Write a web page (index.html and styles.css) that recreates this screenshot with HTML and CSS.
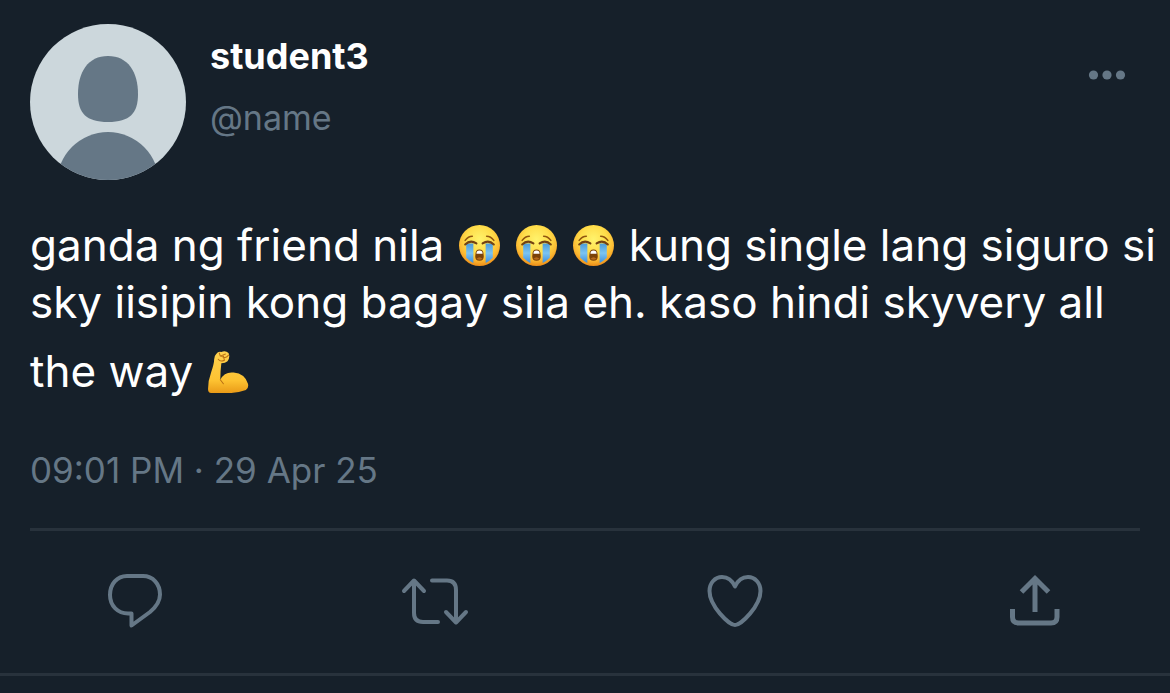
FILE: index.html
```html
<!DOCTYPE html>
<html lang="en">
<head>
  <meta charset="UTF-8" />
  <title>student3</title>
  <meta name="viewport" content="width=device-width, initial-scale=1.0" />
  <link rel="stylesheet" href="styles.css">
</head>
<body>

<svg class="defs" aria-hidden="true">
  <defs>
    <radialGradient id="face" cx="50%" cy="35%" r="65%">
      <stop offset="0" stop-color="#fff36c" />
      <stop offset="0.5" stop-color="#ffdd4a" />
      <stop offset="0.8" stop-color="#fcb831" />
      <stop offset="1" stop-color="#ec8d19" />
    </radialGradient>
    <linearGradient id="tear" x1="0" y1="0" x2="0" y2="1">
      <stop offset="0" stop-color="#4b9bd8" />
      <stop offset="0.5" stop-color="#7cc4f2" />
      <stop offset="1" stop-color="#3f8fdc" />
    </linearGradient>
    <linearGradient id="arm" x1="0" y1="0" x2="0" y2="1">
      <stop offset="0" stop-color="#ffd250" />
      <stop offset="0.7" stop-color="#fdc231" />
      <stop offset="1" stop-color="#e99a17" />
    </linearGradient>
    <symbol id="sob" viewBox="0 0 42 42">
      <circle cx="21" cy="21" r="20" fill="url(#face)" />
      <path d="M8 19H15V38Q11 36 8 33ZM27 19H34V33Q31 36 27 38Z" fill="url(#tear)" />
      <path d="M7 16Q10 12 14 12M28 12Q32 12 35 16" fill="none" stroke="#91550f" stroke-width="1.5" stroke-linecap="round" />
      <path d="M7 20Q12 15 18 19M24 19Q30 15 35 20" fill="none" stroke="#744313" stroke-width="2" stroke-linecap="round" />
      <path d="M17 30Q17 25 21 25Q25 25 25 30Q26 36 21 36Q16 36 17 30Z" fill="#7b4209" />
      <path d="M18 29Q18 26 21 26Q24 26 24 29Z" fill="#fff" />
      <path d="M18 34Q21 31 24 34Q21 36 18 34Z" fill="#b5691c" />
    </symbol>
    <symbol id="biceps" viewBox="0 0 42 42">
      <path d="M9 4Q11 1 14 2Q18 0 21 3Q23 7 20 11Q18 13 14 13Q13 21 13 29Q17 21 26 22Q37 23 40 33Q41 37 38 39Q27 43 13 42H4Q1 42 1 38Q1 30 4 22Q7 13 7 9Q7 6 9 4Z" fill="url(#arm)" />
      <path d="M12 3L13 6L18 4M14 6Q18 9 21 5M16 6L17 10Q13 12 11 9M13 29L16 33" fill="none" stroke="#b96f13" stroke-width="1" stroke-linecap="round" />
    </symbol>
  </defs>
</svg>

<article class="tweet">
  <header class="tweet-header">
    <svg class="avatar" viewBox="0 0 156 156" role="img" aria-label="student3">
      <clipPath id="round"><circle cx="78" cy="78" r="78" /></clipPath>
      <g clip-path="url(#round)">
        <rect width="156" height="156" fill="#ccd7dc" />
        <path d="M78 32C98 32 108 48 108 70C108 89 100 98 78 98C56 98 48 89 48 70C48 48 58 32 78 32Z" fill="#657786" />
        <circle cx="78" cy="159" r="51" fill="#657786" />
      </g>
    </svg>
    <div class="user">
      <a class="name" href="#">student3</a>
      <a class="handle" href="#">@name</a>
    </div>
    <button class="more" aria-label="More">
      <svg width="38" height="10" viewBox="0 0 38 10" fill="currentColor">
        <circle cx="5.5" cy="5" r="4.6" />
        <circle cx="19" cy="5" r="4.6" />
        <circle cx="32.5" cy="5" r="4.6" />
      </svg>
    </button>
  </header>

  <p class="text">
    ganda ng friend nila
    <svg class="emoji" role="img" aria-label="crying"><use href="#sob" /></svg>
    <svg class="emoji" role="img" aria-label="crying"><use href="#sob" /></svg>
    <svg class="emoji" role="img" aria-label="crying"><use href="#sob" /></svg>
    kung single lang siguro si<br>
    sky iisipin kong bagay sila eh. kaso hindi skyvery all
    <span class="last-line">the way <svg class="emoji" role="img" aria-label="strong"><use href="#biceps" /></svg></span>
  </p>

  <time class="date" datetime="2025-04-29T21:01">09:01 PM · 29 Apr 25</time>

  <div class="actions">
    <button aria-label="Reply">
      <svg class="icon" viewBox="0 0 80 80">
        <path d="M32 16H48C58 16 65 24 65 34.5C65 42 61 47 55 52L36.5 65.5V53.5H33C23 53.5 15 46 15 35C15 24 22 16 32 16Z" />
      </svg>
    </button>
    <button aria-label="Retweet">
      <svg class="icon" viewBox="0 0 80 80">
        <path d="M9 31L19 20.5L29 31M19 21V53Q19 62 28 62H43M37 20.5H52Q61 20.5 61 30V61M51 52L61 62.5L71 52" />
      </svg>
    </button>
    <button aria-label="Like">
      <svg class="icon" viewBox="0 0 80 80">
        <path d="M40 26.5C37 20 32 17 27 17C20 17 14.5 23 14.5 31C14.5 46 34 65 40 65C46 65 65.5 46 65.5 31C65.5 23 60 17 53 17C48 17 43 20 40 26.5Z" />
      </svg>
    </button>
    <button aria-label="Share">
      <svg class="icon icon-share" viewBox="0 0 80 80">
        <path d="M40 18V52M26.5 32L40 18.5L53.5 32M17.5 49V57Q17.5 63 23.5 63H56Q62 63 62 57V49" />
      </svg>
    </button>
  </div>
</article>

</body>
</html>
```

FILE: styles.css
```css
:root {
  --bg-color: #16202a;
  --text-color: #ffffff;
  --muted: #657786;
  --line: #28323c;
}

* {
  box-sizing: border-box;
}

body {
  margin: 0;
  font-family: 'Inter', sans-serif;
  background: var(--bg-color);
  color: var(--text-color);
}

a {
  text-decoration: none;
}

button {
  display: flex;
  padding: 0;
  border: none;
  background: none;
  color: var(--muted);
  cursor: pointer;
}

.defs {
  position: absolute;
  width: 0;
  height: 0;
}

.tweet {
  padding: 24px 0 0 30px;
  border-bottom: 3px solid var(--line);
}

.tweet-header {
  display: flex;
  align-items: flex-start;
  padding-right: 44px;
}

.avatar {
  width: 156px;
  height: 156px;
}

.user {
  display: flex;
  flex-direction: column;
  flex: 1;
  gap: 16px;
  padding: 10px 0 0 24px;
  line-height: 45px;
}

.name {
  color: var(--text-color);
  font-size: 36px;
  font-weight: bold;
}

.handle {
  color: var(--muted);
  font-size: 34px;
}

.more {
  margin-top: 46px;
}

.text {
  margin: 37px 0 0;
  font-size: 44px;
  line-height: 57px;
}

.last-line {
  display: block;
  padding-top: 12px;
}

.emoji {
  width: 43px;
  height: 43px;
  margin: 0 1px;
  vertical-align: -6px;
}

.date {
  display: block;
  margin-top: 48px;
  color: var(--muted);
  font-size: 35px;
  line-height: 45px;
}

.actions {
  display: flex;
  justify-content: space-between;
  margin: 35px 30px 0 0;
  padding: 29px 65px 33px;
  border-top: 3px solid var(--line);
}

.icon {
  width: 80px;
  height: 80px;
  fill: none;
  stroke: currentColor;
  stroke-width: 4;
  stroke-linecap: round;
  stroke-linejoin: round;
}

.icon-share {
  stroke-width: 5;
  stroke-linecap: butt;
  stroke-linejoin: miter;
}
```
